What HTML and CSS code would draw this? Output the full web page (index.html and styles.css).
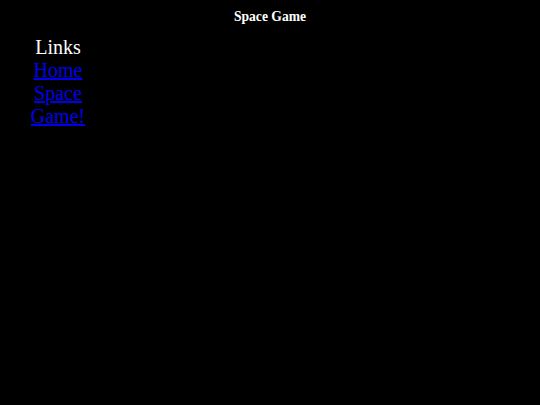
FILE: index.html
```html
<!DOCTYPE html>
<html>
<head>
<meta charset="utf-8">
<title>Space Game</title>
<link rel="stylesheet" href="styles.css">
</head>
<body>
<header class="title">Space Game</header>
<nav class="sidebar">
  <div class="heading">Links</div>
  <a href="#" class="link">Home</a>
  <a href="#" class="link">Space Game!</a>
</nav>
</body>
</html>
```

FILE: styles.css
```css
html, body {
  background: #000;
}
body {
  margin: 8px;
  font-family: "Liberation Serif", "Times New Roman", serif;
  color: #fff;
}
.title {
  text-align: center;
  font-weight: bold;
  font-size: 13.6px;
  line-height: 16px;
  padding-top: 1px;
}
.sidebar {
  width: 100px;
  margin-top: 11px;
  text-align: center;
  font-size: 20px;
  display: flex;
  flex-direction: column;
}
.heading {
  color: #fff;
}
.link {
  color: #0000ee;
}
```
